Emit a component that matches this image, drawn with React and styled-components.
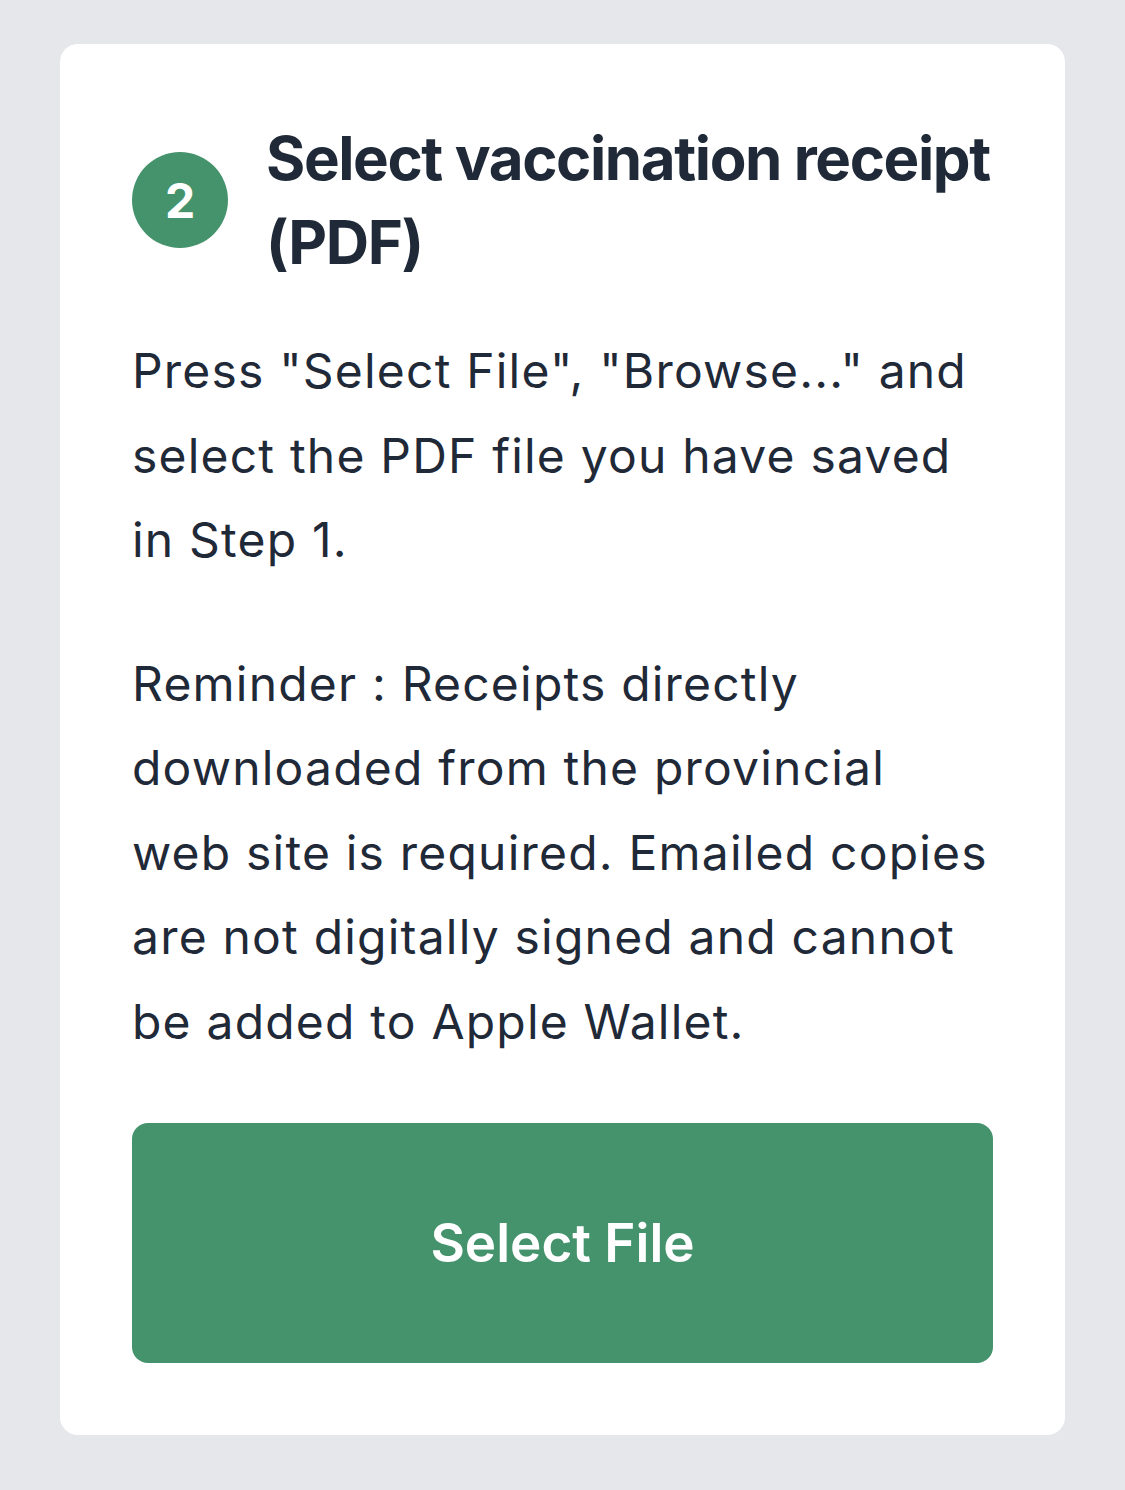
import styled, { createGlobalStyle } from "styled-components";

const GlobalStyle = createGlobalStyle`
  html, body {
    margin: 0;
    padding: 0;
    background-color: #e5e7eb;
  }
  body {
    font-family: Inter, "Noto Sans", sans-serif;
    color: #1f2937;
  }
`;

function App() {
  return (
    <>
      <GlobalStyle />
      <Page>
        <Card>
          <StepHeader>
            <StepBadge>2</StepBadge>
            <StepTitle>Select vaccination receipt (PDF)</StepTitle>
          </StepHeader>
          <Paragraph>
            Press "Select File", "Browse..." and select the PDF file you have
            saved in Step 1.
          </Paragraph>
          <Paragraph>
            Reminder : Receipts directly downloaded from the provincial web site
            is required. Emailed copies are not digitally signed and cannot be
            added to Apple Wallet.
          </Paragraph>
          <Button type="button">Select File</Button>
        </Card>
      </Page>
    </>
  );
}

const Page = styled.div`
  min-height: 1490px;
  box-sizing: border-box;
  padding: 44px 60px 54px;
`;

const Card = styled.div`
  background-color: #ffffff;
  border-radius: 18px;
  padding: 72px;
  display: flex;
  flex-direction: column;
`;

const StepHeader = styled.div`
  display: flex;
  align-items: center;
  gap: 38px;
`;

const StepBadge = styled.div`
  flex: none;
  width: 96px;
  height: 96px;
  border-radius: 50%;
  background-color: #45936d;
  color: #ffffff;
  display: flex;
  align-items: center;
  justify-content: center;
  font-size: 48px;
  font-weight: 700;
`;

const StepTitle = styled.h2`
  margin: 0;
  font-size: 60px;
  line-height: 84px;
  font-weight: 700;
  color: #1f2937;
  letter-spacing: -1.4px;
`;

const Paragraph = styled.p`
  margin: 45px 0 0;
  font-size: 48px;
  line-height: 84.5px;
  font-weight: 400;
  letter-spacing: 1.2px;

  & + & {
    margin-top: 59px;
  }
`;

const Button = styled.button`
  margin-top: 59px;
  height: 240px;
  border: none;
  border-radius: 16px;
  background-color: #45936d;
  color: #ffffff;
  font-family: inherit;
  font-size: 53px;
  font-weight: 600;
  cursor: pointer;
`;

export default App;
